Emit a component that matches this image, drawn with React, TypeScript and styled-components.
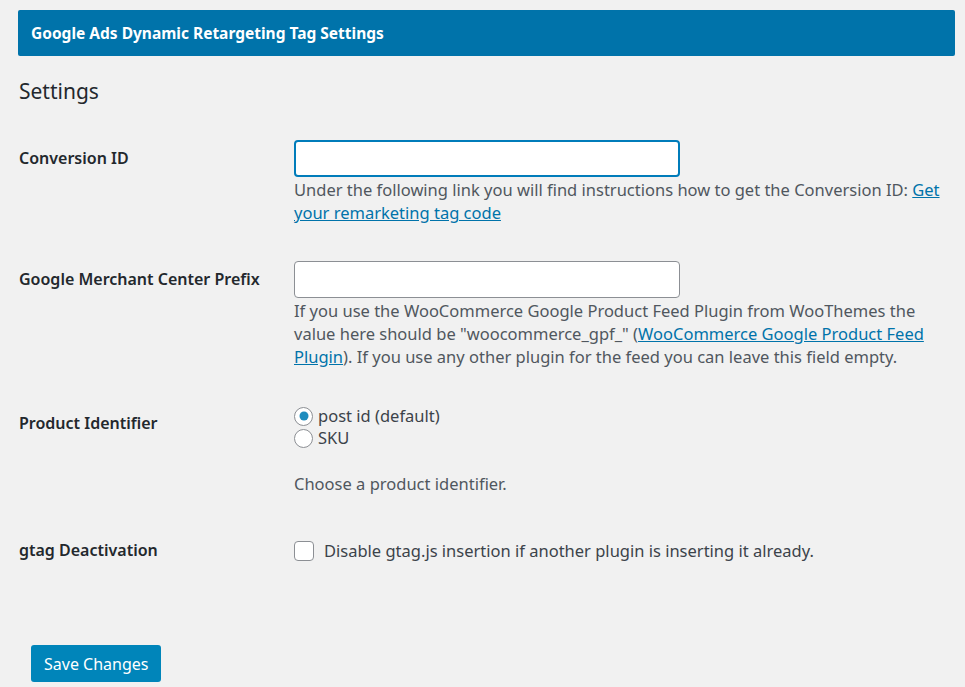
import React, { FC } from "react";
import styled, { createGlobalStyle } from "styled-components";

const GlobalStyle = createGlobalStyle`
  html, body {
    margin: 0;
    padding: 0;
    background: #f1f1f1;
  }
  body {
    font-family: "Noto Sans", "Open Sans", sans-serif;
    color: #23282d;
  }
`;

const App: FC = () => {
  return (
    <>
      <GlobalStyle />
      <Page>
        <TitleBar>Google Ads Dynamic Retargeting Tag Settings</TitleBar>
        <Heading>Settings</Heading>

        <Row>
          <Label>Conversion ID</Label>
          <Field>
            <TextInput type="text" focused />
            <Description>
              Under the following link you will find instructions how to get
              the Conversion ID: <Link href="#">Get your remarketing tag code</Link>
            </Description>
          </Field>
        </Row>

        <Row>
          <Label>Google Merchant Center Prefix</Label>
          <Field>
            <TextInput type="text" />
            <Description>
              If you use the WooCommerce Google Product Feed Plugin from
              WooThemes the value here should be "woocommerce_gpf_" (
              <Link href="#">WooCommerce Google Product Feed Plugin</Link>). If
              you use any other plugin for the feed you can leave this field
              empty.
            </Description>
          </Field>
        </Row>

        <Row>
          <Label>Product Identifier</Label>
          <Field>
            <Choice>
              <Radio checked />
              <span>post id (default)</span>
            </Choice>
            <Choice>
              <Radio />
              <span>SKU</span>
            </Choice>
            <Description spaced>Choose a product identifier.</Description>
          </Field>
        </Row>

        <Row>
          <Label>gtag Deactivation</Label>
          <Field>
            <CheckRow>
              <Checkbox />
              <span>Disable gtag.js insertion if another plugin is inserting it already.</span>
            </CheckRow>
          </Field>
        </Row>

        <SaveButton>Save Changes</SaveButton>
      </Page>
    </>
  );
};

const Page = styled.div`
  padding: 10px 10px 0 18px;
`;

const TitleBar = styled.div`
  height: 46px;
  display: flex;
  align-items: center;
  padding-left: 13px;
  background: #0073aa;
  color: #fff;
  font-weight: 700;
  font-size: 15.5px;
  border-radius: 2px;
`;

const Heading = styled.h2`
  margin: 23px 0 0 1px;
  font-size: 21px;
  line-height: 24px;
  font-weight: 400;
  color: #23282d;
`;

const Row = styled.div`
  display: flex;
  margin-top: 37px;
`;

const Label = styled.div`
  width: 275px;
  flex: none;
  padding-left: 1px;
  line-height: 37px;
  font-size: 16px;
  font-weight: 600;
  color: #23282d;
`;

const Field = styled.div`
  flex: 1;
  font-size: 16.5px;
  line-height: 23px;
  color: #50575e;
`;

const TextInput = styled.input<{ focused?: boolean }>`
  display: block;
  box-sizing: border-box;
  width: 386px;
  height: 37px;
  margin: 0 0 1px 0;
  border-radius: 4px;
  background: #fff;
  border: ${({ focused }) => (focused ? "2px solid #007cba" : "1px solid #8c8f94")};
  outline: none;
`;

const Description = styled.p<{ spaced?: boolean }>`
  margin: ${({ spaced }) => (spaced ? "23px" : "0")} 0 0 0;
  max-width: 650px;
  font-size: 16.5px;
  line-height: 23px;
  color: #50575e;
`;

const Link = styled.a`
  color: #0073aa;
  text-decoration: underline;
`;

const Choice = styled.label`
  display: flex;
  align-items: center;
  gap: 5px;
  line-height: 22px;
  color: #3c434a;
`;

const Radio = styled.span<{ checked?: boolean }>`
  box-sizing: border-box;
  width: 19px;
  height: 19px;
  border-radius: 50%;
  border: 1px solid #8c8f94;
  background: #fff;
  position: relative;
  flex: none;

  &:after {
    content: "";
    display: ${({ checked }) => (checked ? "block" : "none")};
    position: absolute;
    top: 50%;
    left: 50%;
    width: 9px;
    height: 9px;
    border-radius: 50%;
    background: #1e8cbe;
    transform: translate(-50%, -50%);
  }
`;

const CheckRow = styled.label`
  display: flex;
  align-items: center;
  gap: 10px;
  height: 37px;
  color: #3c434a;
`;

const Checkbox = styled.span`
  box-sizing: border-box;
  width: 20px;
  height: 20px;
  border-radius: 4px;
  border: 1px solid #8c8f94;
  background: #fff;
  flex: none;
`;

const SaveButton = styled.button`
  margin: 76px 0 0 13px;
  height: 37px;
  padding: 0 13px;
  border: none;
  border-radius: 3px;
  background: #0085ba;
  color: #fff;
  font-family: "Noto Sans", "Open Sans", sans-serif;
  font-size: 16px;
`;

export default App;
